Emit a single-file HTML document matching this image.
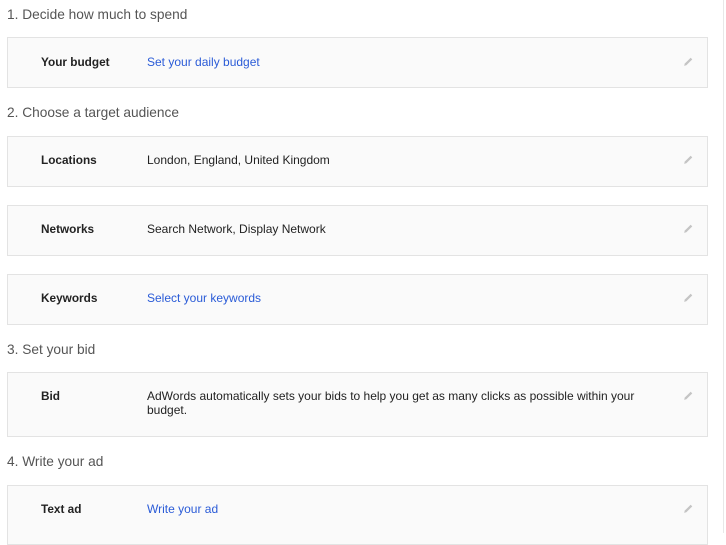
<!DOCTYPE html><html><head><style>
body{margin:0;width:726px;height:533px;overflow:hidden;background:#fff;font-family:"Liberation Sans",sans-serif;position:relative}
.h{position:absolute;left:7px;font-size:13.7px;color:#555;line-height:16px}
.b{position:absolute;left:7px;width:701px;background:#fafafa;border:1px solid #e3e3e3;box-sizing:border-box}
.l{position:absolute;left:33px;font-weight:bold;font-size:11.8px;color:#222;line-height:14px}
.v{position:absolute;left:139px;font-size:12px;color:#222;line-height:14px;width:500px}
.a{color:#2a5bd7}
.p{position:absolute;right:12px;width:13px;height:13px}
.vl{position:absolute;left:723px;top:0;width:1px;height:533px;background:#e8e8e8}
</style></head><body>
<div class="vl"></div>
<div class="h" style="top:7px">1. Decide how much to spend</div>
<div class="b" style="top:37px;height:51px"><div class="l" style="top:17px">Your budget</div><div class="v a" style="top:17px">Set your daily budget</div><svg class="p" style="top:17px" viewBox="0 0 12 12"><path d="M2 10 L2.5 8 L8 2.5 L9.5 4 L4 9.5Z" fill="#c4c4c4"/></svg></div>
<div class="h" style="top:105px">2. Choose a target audience</div>
<div class="b" style="top:136px;height:51px"><div class="l" style="top:16px">Locations</div><div class="v" style="top:16px">London, England, United Kingdom</div><svg class="p" style="top:16px" viewBox="0 0 12 12"><path d="M2 10 L2.5 8 L8 2.5 L9.5 4 L4 9.5Z" fill="#c4c4c4"/></svg></div>
<div class="b" style="top:205px;height:51px"><div class="l" style="top:16px">Networks</div><div class="v" style="top:16px">Search Network, Display Network</div><svg class="p" style="top:16px" viewBox="0 0 12 12"><path d="M2 10 L2.5 8 L8 2.5 L9.5 4 L4 9.5Z" fill="#c4c4c4"/></svg></div>
<div class="b" style="top:274px;height:51px"><div class="l" style="top:16px">Keywords</div><div class="v a" style="top:16px">Select your keywords</div><svg class="p" style="top:16px" viewBox="0 0 12 12"><path d="M2 10 L2.5 8 L8 2.5 L9.5 4 L4 9.5Z" fill="#c4c4c4"/></svg></div>
<div class="h" style="top:342px">3. Set your bid</div>
<div class="b" style="top:372px;height:65px"><div class="l" style="top:16px">Bid</div><div class="v" style="top:16px">AdWords automatically sets your bids to help you get as many clicks as possible within your budget.</div><svg class="p" style="top:16px" viewBox="0 0 12 12"><path d="M2 10 L2.5 8 L8 2.5 L9.5 4 L4 9.5Z" fill="#c4c4c4"/></svg></div>
<div class="h" style="top:454px">4. Write your ad</div>
<div class="b" style="top:485px;height:60px"><div class="l" style="top:16px">Text ad</div><div class="v a" style="top:16px">Write your ad</div><svg class="p" style="top:16px" viewBox="0 0 12 12"><path d="M2 10 L2.5 8 L8 2.5 L9.5 4 L4 9.5Z" fill="#c4c4c4"/></svg></div>
</body></html>
